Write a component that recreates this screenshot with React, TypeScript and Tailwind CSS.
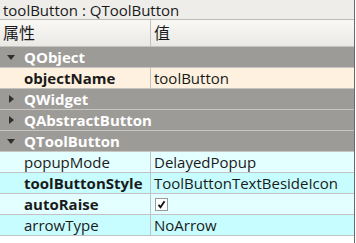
const font = { fontFamily: '"Open Sans", "Noto Sans CJK SC", sans-serif' };

type Row =
  | { kind: "group"; name: string; open: boolean }
  | { kind: "prop"; name: string; value: string; bold?: boolean; bg: string; check?: boolean };

const rows: Row[] = [
  { kind: "group", name: "QObject", open: true },
  { kind: "prop", name: "objectName", value: "toolButton", bold: true, bg: "bg-[#fef1df]" },
  { kind: "group", name: "QWidget", open: false },
  { kind: "group", name: "QAbstractButton", open: false },
  { kind: "group", name: "QToolButton", open: true },
  { kind: "prop", name: "popupMode", value: "DelayedPopup", bg: "bg-[#e4ffff]" },
  { kind: "prop", name: "toolButtonStyle", value: "ToolButtonTextBesideIcon", bold: true, bg: "bg-[#c8fdff]" },
  { kind: "prop", name: "autoRaise", value: "", bold: true, bg: "bg-[#e4ffff]", check: true },
  { kind: "prop", name: "arrowType", value: "NoArrow", bg: "bg-[#c8fdff]" },
];

function Arrow({ open }: { open: boolean }) {
  return (
    <svg width="10" height="10" viewBox="0 0 10 10" className="shrink-0">
      {open ? <path d="M1 3h8L5 8z" fill="#2f2f2f" /> : <path d="M3 1v8l5-4z" fill="#2f2f2f" />}
    </svg>
  );
}

export default function App() {
  return (
    <div className="w-[356px] h-[243px] bg-white text-[15px] text-[#1a1a1a] leading-none" style={font}>
      <div className="w-[355px] h-full border-r border-[#6a6a6a] flex flex-col">
        {/* title */}
        <div className="h-[20px] bg-[#efedea] border-b border-[#bcbab6] flex items-center pl-[3px] pt-[1px]">
          toolButton : QToolButton
        </div>
        {/* header */}
        <div className="h-[27px] bg-gradient-to-b from-[#faf8f5] to-[#ebe9e6] border-b border-[#c4c2be] flex text-[16px]">
          <div className="w-[151px] border-r border-[#c4c2be] flex items-center pl-[3px]">属性</div>
          <div className="flex-1 flex items-center pl-[3px]">值</div>
        </div>
        {rows.map((r) =>
          r.kind === "group" ? (
            <div
              key={r.name}
              className="h-[21px] bg-[#9d9b97] border-b border-[#c8c6c2] flex items-center pl-[6px] gap-[8px] text-white font-bold"
            >
              <Arrow open={r.open} />
              {r.name}
            </div>
          ) : (
            <div key={r.name} className={`h-[21px] ${r.bg} border-b border-[#c2c2c2] flex`}>
              <div className={`w-[151px] border-r border-[#c2c2c2] flex items-center pl-[24px] ${r.bold ? "font-bold" : ""}`}>
                {r.name}
              </div>
              <div className="flex-1 flex items-center pl-[3px]">
                {r.check ? (
                  <span className="w-[13px] h-[13px] ml-[1px] bg-white border border-[#9a9a9a] flex items-center justify-center">
                    <svg width="9" height="9" viewBox="0 0 9 9">
                      <path d="M1.5 4.8l2 2.4L7.5 1.2" stroke="#111" strokeWidth="1.8" fill="none" />
                    </svg>
                  </span>
                ) : (
                  r.value
                )}
              </div>
            </div>
          )
        )}
      </div>
    </div>
  );
}
